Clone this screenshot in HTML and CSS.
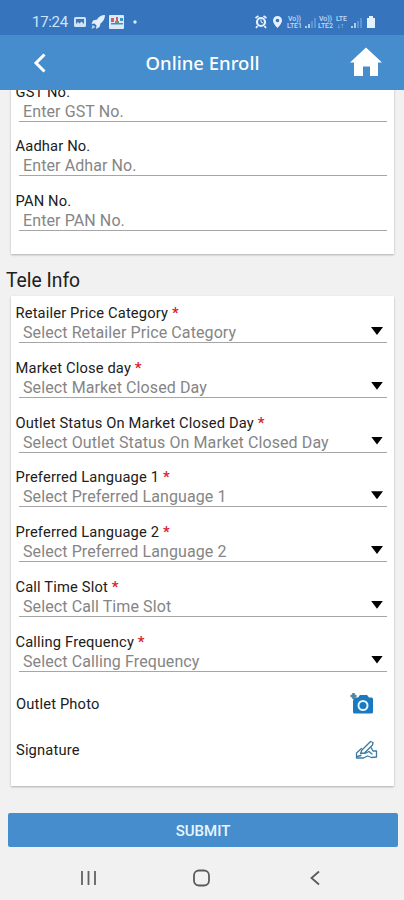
FILE: index.html
```html
<!DOCTYPE html>
<html lang="en">
<head>
<meta charset="utf-8">
<title>Online Enroll</title>
<link rel="stylesheet" href="styles.css">
</head>
<body>
<div class="status">
  <span class="clock">17:24</span>
  <svg class="status-left" width="68" height="18" viewBox="0 0 68 18">
    <rect x="1" y="4" width="12" height="10" rx="1.5" fill="#cfe2f6"/>
    <path d="M3 6h8v5l-2.500-2.500-2 2L5 9l-2 2z" fill="#3f75b8"/>
    <path d="M32 2c-4 0-6 1.500-8 4.500l-4 1L18.500 11l3-.5 2 2L23 16l3.500-2 1-3.500C30 8.500 32 6 32 2z" fill="#e3f0fc"/>
    <path d="M19.500 12l-1 4 4-2" fill="#bcd7f1"/>
    <rect x="36" y="2" width="15" height="14" rx="1" fill="#dceaf6"/>
    <path d="M38 5h3v4h-3zM43 4h2v4h-2z" fill="#d65b68"/>
    <path d="M47 5h3v3h-3zM38 10h12v1.500H38z" fill="#438fc4"/>
    <path d="M42 8h4v2h-4z" fill="#6b9b78"/>
    <circle cx="62" cy="9" r="1.700" fill="#d8eafc"/>
  </svg>
  <svg class="status-right" width="124" height="18" viewBox="0 0 124 18">
    <g fill="none" stroke="#e4f1ff">
      <circle cx="7" cy="9" r="4" stroke-width="2.200"/>
      <path d="M1.500 5l3-2M9.500 3l3 2M3.500 13L2 15M10.500 13l1.500 2" stroke-width="1.800"/>
      <path d="M7 6.500V9l2 1" stroke-width="1"/>
    </g>
    <path fill-rule="evenodd" d="M23.500 3a4.500 4.500 0 0 0-4.500 4.500c0 3 4.500 7.500 4.500 7.500s4.500-4.500 4.500-7.500A4.500 4.500 0 0 0 23.500 3zm0 2.700a1.800 1.800 0 1 1 0 3.600 1.800 1.800 0 0 1 0-3.600z" fill="#e4f1ff"/>
    <g class="network">
      <text x="34" y="8" textLength="13">Vo))</text><text x="33" y="15" textLength="15">LTE1</text>
      <text x="65" y="8" textLength="13">Vo))</text><text x="64" y="15" textLength="15">LTE2</text>
      <text x="82" y="8" textLength="11">LTE</text><text x="83" y="15">↓↑</text>
    </g>
    <path d="M51 15v-2h2v2zM54 15v-4h2v4z" fill="#a9ccef"/>
    <path d="M57 15V8h2v7zM60 15V5h2v10z" fill="#5d94d3"/>
    <path d="M97 15v-2h2v2zM100 15v-5h2v5z" fill="#a9ccef"/>
    <path d="M103 15V8h2v7zM106 15V5h2v10z" fill="#5d94d3"/>
    <path d="M113 5h2V3h4v2h2v10h-8z" fill="#e4f1ff"/>
  </svg>
</div>
<header class="appbar">
  <svg class="back" width="16" height="22" viewBox="0 0 16 22"><path d="M12.500 2.500L4 11l8.500 8.500" fill="none" stroke="#fff" stroke-width="3"/></svg>
  <h1>Online Enroll</h1>
  <svg class="home" width="34" height="30" viewBox="0 0 34 30"><path d="M17 .5L33 15.500h-4V29h-8v-9.500h-7V29H5V15.500H1z" fill="#fff"/></svg>
</header>
<main>
  <section class="card ids">
    <div class="field"><label>GST No.</label><div class="value">Enter GST No.</div></div>
    <div class="field"><label>Aadhar No.</label><div class="value">Enter Adhar No.</div></div>
    <div class="field"><label>PAN No.</label><div class="value">Enter PAN No.</div></div>
  </section>
  <h2>Tele Info</h2>
  <section class="card tele">
    <div class="field"><label>Retailer Price Category <b>*</b></label><div class="value select">Select Retailer Price Category</div></div>
    <div class="field"><label>Market Close day <b>*</b></label><div class="value select">Select Market Closed Day</div></div>
    <div class="field"><label>Outlet Status On Market Closed Day <b>*</b></label><div class="value select">Select Outlet Status On Market Closed Day</div></div>
    <div class="field"><label>Preferred Language 1 <b>*</b></label><div class="value select">Select Preferred Language 1</div></div>
    <div class="field"><label>Preferred Language 2 <b>*</b></label><div class="value select">Select Preferred Language 2</div></div>
    <div class="field"><label>Call Time Slot <b>*</b></label><div class="value select">Select Call Time Slot</div></div>
    <div class="field"><label>Calling Frequency <b>*</b></label><div class="value select">Select Calling Frequency</div></div>
    <div class="attach"><span>Outlet Photo</span>
      <svg width="24" height="24" viewBox="0 0 24 24">
        <path d="M4 5.500h4l2-2.500h7l2 2.500h2.500A1.500 1.500 0 0 1 23 7v13a1.500 1.500 0 0 1-1.500 1.500h-17A1.500 1.500 0 0 1 3 20V9z" fill="#1b79c0"/>
        <circle cx="13" cy="13.500" r="4.500" fill="#1b79c0" stroke="#e7f5ff" stroke-width="2"/>
        <path d="M3.500 1v6M.5 4h6" stroke="#52849f" stroke-width="2.600"/>
      </svg>
    </div>
    <div class="attach sign"><span>Signature</span>
      <svg width="24" height="22" viewBox="0 0 24 22">
        <g fill="none" stroke="#3a7ba4" stroke-width="1.300" stroke-linejoin="round" stroke-linecap="round">
          <path d="M6.500 14.500L8 11l8.500-8.500 2.500 1-.5 2.500-8 8z"/>
          <path d="M7.500 9.500L2.500 14v5h7l4-2 4 1.500 5-.5V12h-3.500L17 8.500"/>
          <path d="M11 14.500l4-2 3 2.500M3 17.500l4-1"/>
        </g>
      </svg>
    </div>
  </section>
</main>
<button class="submit">SUBMIT</button>
<nav>
  <svg width="18" height="18" viewBox="0 0 18 18"><path d="M2 2v14M8.500 2v14M15 2v14" stroke="#626262" stroke-width="1.800"/></svg>
  <svg width="20" height="20" viewBox="0 0 20 20"><rect x="2" y="2.500" width="15" height="15" rx="5" fill="none" stroke="#5b5b5b" stroke-width="1.800"/></svg>
  <svg width="18" height="18" viewBox="0 0 18 18"><path d="M13 2.500L5.500 9l7.500 6.500" fill="none" stroke="#5b5b5b" stroke-width="1.800"/></svg>
</nav>
</body>
</html>
```
FILE: styles.css
```css
* { box-sizing: border-box; }
body {
  margin: 0;
  width: 404px;
  height: 900px;
  overflow: hidden;
  display: flex;
  flex-direction: column;
  background: #f1f1f1;
  font-family: Roboto, "Liberation Sans", sans-serif;
}
.status {
  height: 35px;
  flex: none;
  display: flex;
  align-items: center;
  padding: 8px 26px 0 32px;
  background: #3774be;
  color: #cfe4fa;
}
.clock { width: 41px; font-size: 15px; line-height: 18px; letter-spacing: -0.3px; }
.status-right { margin-left: auto; }
.network { font-size: 7px; font-weight: 500; fill: #c0dbf7; }
.appbar {
  height: 55px;
  flex: none;
  display: flex;
  align-items: center;
  padding: 0 21px 0 32px;
  background: #458dcd;
  color: #fff;
}
.appbar h1 {
  flex: 1;
  margin: 0 0 0 8px;
  padding-top: 1px;
  text-align: center;
  font: 500 18.5px/24px "Noto Sans", sans-serif;
}
.home { margin-top: -1px; }
main { height: 710px; flex: none; overflow: hidden; padding: 0 10px 0 11px; }
.card {
  background: #fff;
  box-shadow: 0 1px 2px rgba(0, 0, 0, 0.28);
  padding: 0 7px 0 4.5px;
}
.ids { margin-top: -7.5px; height: 171px; }
.tele { height: 490px; padding-top: 8.5px; }
.field { height: 54.75px; }
.field label { display: block; font-size: 14.7px; line-height: 18px; color: #202020; letter-spacing: 0.16px; white-space: nowrap; }
.field b { color: #d81f35; font-weight: 700; }
.value {
  height: 21px;
  margin-left: 3.5px;
  padding-left: 4px;
  border-bottom: 1px solid #a6a6a6;
  font-size: 16px;
  line-height: 22px;
  letter-spacing: 0.1px;
  color: #858585;
  white-space: nowrap;
}
.select { display: flex; justify-content: space-between; }
.select::after {
  content: "";
  width: 12px;
  height: 8px;
  margin: 5px 4px 0 0;
  background: #000;
  clip-path: polygon(0 0, 100% 0, 50% 100%);
}
h2 { margin: 0 0 0 -5px; padding-top: 5px; height: 42px; font-size: 19.3px; line-height: 43px; font-weight: 400; color: #202020; }
.attach {
  height: 45px;
  display: flex;
  align-items: center;
  justify-content: space-between;
  margin-top: -5.5px;
  padding-right: 13px;
  font-size: 14.7px;
  letter-spacing: 0.16px;
  color: #202020;
}
.attach span { padding-left: 0.5px; }
.attach.sign { margin-top: 0.5px; padding-right: 9px; }
.submit {
  flex: none;
  height: 34px;
  margin: 12.5px 6px 0 8px;
  border: 0;
  border-radius: 2px;
  background: #458dcd;
  color: #e8f5ff;
  font: 500 15px/34px Roboto, sans-serif;
}
nav {
  flex: 1;
  display: grid;
  grid-template-columns: repeat(3, 113px);
  justify-content: center;
  justify-items: center;
  align-items: center;
  padding: 9px 1px 0 0;
}
```
